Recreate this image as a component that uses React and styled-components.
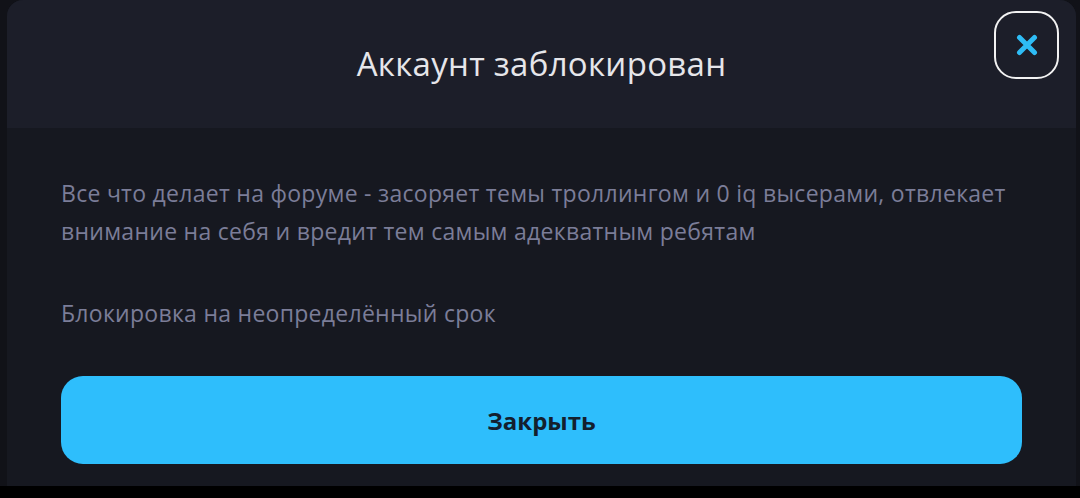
import React from 'react'
import styled, { createGlobalStyle } from 'styled-components'

const GlobalStyle = createGlobalStyle`
  html, body {
    margin: 0;
    padding: 0;
    background: #000;
  }
  body {
    font-family: "Open Sans", "Noto Sans", sans-serif;
  }
`

const Page = styled.div`
  width: 1080px;
  height: 498px;
  background: #000;
  overflow: hidden;
`

const Backdrop = styled.div`
  height: 486px;
  display: flex;
  background: #111218;
  padding: 0 4px 0 7px;
  box-sizing: border-box;
`

const Modal = styled.div`
  flex: 1;
  display: flex;
  flex-direction: column;
  border-radius: 16px 16px 0 0;
  overflow: hidden;
  background: #161820;
`

const Header = styled.header`
  height: 128px;
  flex-shrink: 0;
  background: #1c1e29;
  display: grid;
  grid-template-columns: 1fr auto 1fr;
  align-items: center;
  padding: 0 17px 0 0;
`

const Title = styled.h2`
  grid-column: 2;
  margin: 0 0 2px;
  font-size: 33px;
  font-weight: 400;
  color: #e6e6ea;
  letter-spacing: 0.3px;
  padding-left: 17px;
`

const CloseButton = styled.button`
  grid-column: 3;
  justify-self: end;
  align-self: start;
  margin-top: 11px;
  width: 65px;
  height: 68px;
  border: 2.5px solid #f2f2f2;
  border-radius: 22px;
  background: transparent;
  display: flex;
  align-items: center;
  justify-content: center;
  padding: 0;
  cursor: pointer;
`

const Body = styled.div`
  flex: 1;
  display: flex;
  flex-direction: column;
  gap: 44px;
  padding: 46px 54px 22px 54px;
`

const Text = styled.p`
  margin: 0;
  font-size: 23px;
  line-height: 38px;
  letter-spacing: 0.28px;
  color: #7b7d98;
`

const PrimaryButton = styled.button`
  height: 88px;
  border: none;
  border-radius: 22px;
  background: #2ebefc;
  color: #13202e;
  font-family: "Open Sans", "Noto Sans", sans-serif;
  font-size: 24px;
  font-weight: 700;
  cursor: pointer;
`

function CrossIcon() {
  return (
    <svg width="22" height="22" viewBox="0 0 22 22">
      <path
        d="M3.5 3.5 L18.5 18.5 M18.5 3.5 L3.5 18.5"
        stroke="#2ebcf5"
        strokeWidth="5"
        strokeLinecap="round"
      />
    </svg>
  )
}

export default function App() {
  return (
    <Page>
      <GlobalStyle />
      <Backdrop>
        <Modal>
          <Header>
            <Title>Аккаунт заблокирован</Title>
            <CloseButton aria-label="Закрыть">
              <CrossIcon />
            </CloseButton>
          </Header>
          <Body>
            <Text>
              Все что делает на форуме - засоряет темы троллингом и 0 iq высерами, отвлекает
              внимание на себя и вредит тем самым адекватным ребятам
            </Text>
            <Text>Блокировка на неопределённый срок</Text>
            <PrimaryButton>Закрыть</PrimaryButton>
          </Body>
        </Modal>
      </Backdrop>
    </Page>
  )
}
